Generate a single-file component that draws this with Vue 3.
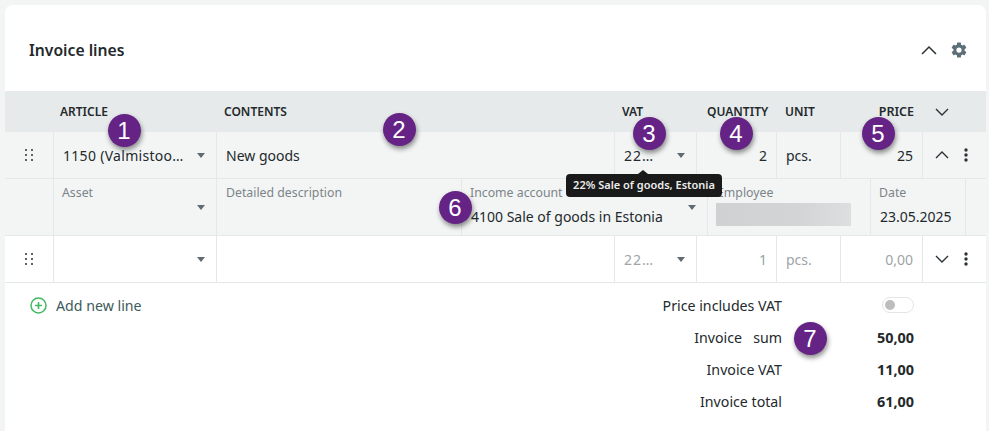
<script setup>
const badges = [
  { n: 1, x: 124, y: 130 },
  { n: 2, x: 399, y: 129 },
  { n: 3, x: 649, y: 133 },
  { n: 4, x: 736, y: 133 },
  { n: 5, x: 878, y: 133 },
  { n: 6, x: 455, y: 207 },
  { n: 7, x: 810, y: 338 },
]
const totals = [
  { label: 'Invoice \u00a0 sum', value: '50,00' },
  { label: 'Invoice VAT', value: '11,00' },
  { label: 'Invoice total', value: '61,00' },
]
</script>

<template>
  <div class="page">
    <section class="card">
      <header class="head">
        <h2>Invoice lines</h2>
        <div class="head-icons">
          <svg width="16" height="10" viewBox="0 0 16 10"><path d="M1 9l7-7 7 7" fill="none" stroke="#2b3337" stroke-width="1.5"/></svg>
          <svg width="18" height="18" viewBox="0 0 24 24"><path fill="#5c6f78" d="M19.4 13c.04-.33.06-.66.06-1s-.02-.67-.06-1l2.1-1.65c.2-.15.25-.42.12-.64l-2-3.46c-.12-.22-.38-.3-.6-.22l-2.5 1c-.52-.4-1.08-.73-1.69-.98l-.38-2.65A.49.49 0 0 0 14 2h-4c-.25 0-.46.18-.5.42l-.37 2.65c-.61.25-1.17.59-1.69.98l-2.49-1a.5.5 0 0 0-.61.22l-2 3.46c-.13.22-.07.49.12.64L4.57 11c-.04.33-.07.67-.07 1s.03.67.07 1l-2.11 1.65c-.19.15-.25.42-.12.64l2 3.46c.12.22.38.3.61.22l2.49-1c.52.4 1.08.73 1.69.98l.37 2.65c.04.24.25.42.5.42h4c.25 0 .46-.18.5-.42l.37-2.65c.61-.25 1.17-.59 1.69-.98l2.49 1c.23.08.49 0 .61-.22l2-3.46c.12-.22.07-.49-.12-.64L19.4 13zM12 15.5a3.5 3.5 0 1 1 0-7 3.5 3.5 0 0 1 0 7z"/></svg>
        </div>
      </header>

      <div class="grid thead">
        <div></div>
        <div class="th">ARTICLE</div>
        <div class="th th-contents">CONTENTS</div>
        <div class="th th-vat">VAT</div>
        <div class="th qty-h">QUANTITY</div>
        <div class="th unit-h">UNIT</div>
        <div class="th right">PRICE</div>
        <div class="th act-h">
          <svg width="14" height="8" viewBox="0 0 14 8"><path d="M1 1l6 6 6-6" fill="none" stroke="#2b3337" stroke-width="1.4"/></svg>
        </div>
      </div>

      <div class="grid row tinted">
        <div class="drag"><svg width="8" height="12" viewBox="0 0 8 12"><path fill="#5a6468" d="M0 0h2v2H0zM6 0h2v2H6zM0 5h2v2H0zM6 5h2v2H6zM0 10h2v2H0zM6 10h2v2H6z"/></svg></div>
        <div class="td sel"><span class="ellip">1150 (Valmistoo…</span><i class="caret"></i></div>
        <div class="td">New goods</div>
        <div class="td sel"><span class="short">22…</span><i class="caret"></i></div>
        <div class="td right">2</div>
        <div class="td">pcs.</div>
        <div class="td right">25</div>
        <div class="td actions">
          <svg width="14" height="8" viewBox="0 0 14 8"><path d="M1 7l6-6 6 6" fill="none" stroke="#2b3337" stroke-width="1.4"/></svg>
          <svg width="4" height="14" viewBox="0 0 4 14"><circle cx="2" cy="2" r="1.7" fill="#2b3337"/><circle cx="2" cy="7" r="1.7" fill="#2b3337"/><circle cx="2" cy="12" r="1.7" fill="#2b3337"/></svg>
        </div>
      </div>

      <div class="sub tinted">
        <div></div>
        <div class="field"><label>Asset</label><i class="caret field-caret"></i></div>
        <div class="field"><label class="nudge">Detailed description</label></div>
        <div class="field"><label>Income account</label><span class="val nudge">4100 Sale of goods in Estonia</span><i class="caret field-caret"></i></div>
        <div class="field"><label class="nudge">Employee</label><span class="blurred"></span></div>
        <div class="field"><label>Date</label><span class="val nudge">23.05.2025</span></div>
        <div class="field"></div>
      </div>

      <div class="grid row">
        <div class="drag"><svg width="8" height="12" viewBox="0 0 8 12"><path fill="#5a6468" d="M0 0h2v2H0zM6 0h2v2H6zM0 5h2v2H0zM6 5h2v2H6zM0 10h2v2H0zM6 10h2v2H6z"/></svg></div>
        <div class="td sel"><span></span><i class="caret"></i></div>
        <div class="td"></div>
        <div class="td sel muted"><span class="short">22…</span><i class="caret"></i></div>
        <div class="td right qty-muted">1</div>
        <div class="td muted">pcs.</div>
        <div class="td right muted">0,00</div>
        <div class="td actions">
          <svg width="14" height="8" viewBox="0 0 14 8"><path d="M1 1l6 6 6-6" fill="none" stroke="#2b3337" stroke-width="1.4"/></svg>
          <svg width="4" height="14" viewBox="0 0 4 14"><circle cx="2" cy="2" r="1.7" fill="#2b3337"/><circle cx="2" cy="7" r="1.7" fill="#2b3337"/><circle cx="2" cy="12" r="1.7" fill="#2b3337"/></svg>
        </div>
      </div>

      <footer class="foot">
        <div class="add">
          <svg width="17" height="17" viewBox="0 0 17 17"><circle cx="8.5" cy="8.5" r="7.5" fill="none" stroke="#43b864" stroke-width="1.5"/><path d="M8.5 5v7M5 8.5h7" stroke="#43b864" stroke-width="1.6"/></svg>
          <span>Add new line</span>
        </div>
        <div class="sums">
          <span class="lab">Price includes VAT</span>
          <span class="toggle"><i></i></span>
          <template v-for="t in totals" :key="t.label">
            <span class="lab">{{ t.label }}</span>
            <b>{{ t.value }}</b>
          </template>
        </div>
      </footer>

      <div class="tip">22% Sale of goods, Estonia</div>
      <span v-for="b in badges" :key="b.n" class="badge" :style="{ left: b.x + 'px', top: b.y + 'px' }">{{ b.n }}</span>
    </section>
  </div>
</template>

<style>
html, body { margin: 0; background: #f3f5f5; }
</style>

<style scoped>
.page {
  height: 431px;
  overflow: hidden;
  padding: 5px 3px 0 5px;
  box-sizing: border-box;
  font-family: "Noto Sans", "Open Sans", sans-serif;
  color: #23292c;
  font-size: 14px;
  position: relative;
}
.card {
  background: #fff;
  border-radius: 8px 8px 0 0;
  height: 426px;
}
.badge {
  position: absolute;
  width: 33px;
  height: 33px;
  margin: -16.5px 0 0 -16.5px;
  border-radius: 50%;
  background: #652385;
  color: #fff;
  font: 24px/33px "Liberation Sans", sans-serif;
  text-align: center;
  box-shadow: 1px 3px 5px rgba(0, 0, 0, .45);
}
.head {
  height: 86px;
  box-sizing: border-box;
  padding: 4px 18px 0 24px;
  display: flex;
  align-items: center;
  justify-content: space-between;
}
h2 {
  margin: 0;
  font-size: 15.7px;
  font-weight: 600;
  color: #23292c;
}
.head-icons { display: flex; align-items: center; gap: 13px; }
.grid {
  display: grid;
  grid-template-columns: 48px 163px 398px 82px 80px 64px 82px 1fr;
}
.thead { height: 41px; background: #e7eaeb; align-items: center; }
.th { font-size: 12px; font-weight: 600; padding: 0 8px 0 7px; color: #23292c; }
.th-contents { padding-left: 8px; }
.th-vat { padding-left: 8px; }
.qty-h { padding-left: 11px; padding-right: 0; white-space: nowrap; }
.unit-h { padding-left: 9px; }
.th.right { text-align: right; font-size: 12.5px; }
.act-h { display: flex; padding-left: 13px; }
.row { height: 46px; border-bottom: 1px solid #e5e8e8; box-sizing: content-box; }
.tinted { background: #f3f5f5; }
.drag { display: flex; align-items: center; padding-left: 20px; }
.td {
  border-left: 1px solid #e5e8e8;
  display: flex;
  align-items: center;
  padding: 0 9px;
  min-width: 0;
}
.td.right { justify-content: flex-end; }
.sel { justify-content: space-between; padding-right: 11px; }
.ellip { white-space: nowrap; letter-spacing: .3px; }
.short { letter-spacing: 1px; }
.muted { color: #9ea5a8; }
.qty-muted { color: #8fa89b; }
.caret {
  width: 0;
  height: 0;
  border: 4px solid transparent;
  border-top: 5px solid #5f6b70;
  border-bottom: 0;
  flex: none;
}
.actions { justify-content: space-between; padding: 0 18px 0 12px; }
.sub {
  display: grid;
  grid-template-columns: 48px 163px 245px 246px 163px 95px 1fr;
  height: 56px;
  border-bottom: 1px solid #e5e8e8;
  box-sizing: content-box;
}
.field {
  border-left: 1px solid #e5e8e8;
  position: relative;
  padding: 6px 8px 0 8px;
  min-width: 0;
}
.field label { display: block; font-size: 12.3px; line-height: 16px; color: #7b8488; white-space: nowrap; }
.nudge { padding-left: 1px; }
.val { display: block; margin-top: 7px; font-size: 14px; line-height: 18px; white-space: nowrap; }
.field-caret { position: absolute; right: 11px; top: 26px; }
.blurred {
  display: block;
  width: 135px;
  height: 23px;
  margin-top: 2px;
  background: linear-gradient(90deg, #cfd1d2, #d2d4d5 60%, #dcdfe0);
}
.foot {
  display: flex;
  justify-content: space-between;
  align-items: flex-start;
  padding: 6px 72px 0 25px;
  font-size: 14.2px;
}
.add {
  display: flex;
  align-items: center;
  gap: 9px;
  height: 32px;
  color: #3d5a5c;
}
.sums {
  display: grid;
  grid-template-columns: auto 132px;
  grid-auto-rows: 32px;
  align-items: center;
  justify-items: end;
}
.lab { white-space: pre; }
.sums b { font-size: 14.4px; font-weight: 700; }
.toggle {
  width: 28px;
  height: 14px;
  border: 1px solid #e3e6e6;
  border-radius: 8px;
  display: flex;
  align-items: center;
  padding-left: 2px;
  box-sizing: content-box;
}
.toggle i { width: 10px; height: 10px; border-radius: 50%; background: #bdbdbd; }
.tip {
  position: absolute;
  left: 566px;
  top: 174px;
  width: 156px;
  height: 23px;
  background: #1a1a1a;
  color: #ececec;
  border-radius: 4px;
  font-size: 11px;
  font-weight: 600;
  line-height: 22px;
  text-align: center;
  white-space: nowrap;
}
.tip::before {
  content: "";
  position: absolute;
  left: 72px;
  top: -4px;
  border: 5px solid transparent;
  border-top: 0;
  border-bottom: 4px solid #1a1a1a;
}
</style>
